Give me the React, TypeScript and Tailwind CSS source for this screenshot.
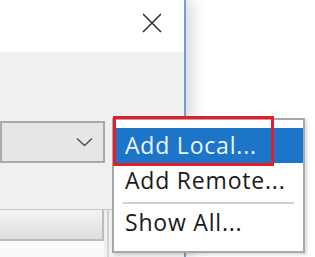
export default function App() {
  return (
    <div
      className="relative h-[257px] w-[315px] overflow-hidden bg-white"
      style={{ fontFamily: '"Open Sans", "Noto Sans", sans-serif' }}
    >
      {/* dialog behind the menu */}
      <div className="flex h-full w-[186px] flex-col border-r-2 border-[#6f9fd2] bg-[#f0f0f0] shadow-[6px_0_14px_rgba(0,0,0,0.16)]">
        <div className="flex h-[52px] shrink-0 items-start justify-end bg-white pr-[22px] pt-[13px]">
          <svg width="20" height="20" viewBox="0 0 20 20">
            <path d="M1 1 L19 19 M19 1 L1 19" stroke="#333" strokeWidth="1.6" fill="none" />
          </svg>
        </div>

        <div className="mt-[69px] flex h-[42px] w-[105px] items-center justify-end border-2 border-[#a9a9a9] bg-[#e6e6e6] pr-[10px]">
          <svg width="17" height="10" viewBox="0 0 17 10">
            <path d="M1 1.5 L8.5 8.5 L16 1.5" stroke="#555" strokeWidth="1.6" fill="none" />
          </svg>
        </div>

        <div className="mt-[46px] flex h-[32px] border-t border-[#c8c8c8]">
          <div className="w-[104px] border-b-2 border-r-2 border-[#bdbdbd] bg-gradient-to-b from-[#f4f4f4] to-[#dedede]" />
          <div className="ml-[3px] w-[2px] bg-[#d0d0d0]" />
        </div>
        <div className="flex flex-1">
          <div className="w-[104px] bg-[#fafafa]" />
          <div className="ml-[3px] w-[2px] bg-[#d6d6d6]" />
        </div>
      </div>

      {/* context menu */}
      <div className="absolute left-[112px] top-[118px] flex h-[135px] w-[193px] flex-col border-2 border-[#a8a8a8] bg-white pt-[8px] text-[23px] leading-none tracking-[0.8px] text-[#1a1a1a] shadow-[2px_2px_3px_rgba(0,0,0,0.15)]">
        <div className="flex h-[35px] items-center bg-[#1c75c8] pl-[11px] text-[#eef4ff]">Add Local...</div>
        <div className="flex h-[34px] items-center pl-[11px]">Add Remote...</div>
        <div className="mx-[9px] mt-[5px] h-[2px] bg-[#d2d2d2]" />
        <div className="flex h-[36px] items-center pl-[11px]">Show All...</div>
      </div>

      {/* highlight frame */}
      <div className="absolute left-[113px] top-[116px] h-[50px] w-[161px] border-[3px] border-[#e01f2a]" />
    </div>
  );
}
